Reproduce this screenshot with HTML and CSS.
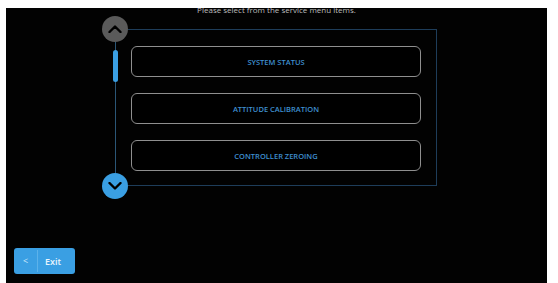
FILE: index.html
```html
<!DOCTYPE html>
<html lang="en">
<head>
    <meta charset="UTF-8">
    <meta name="viewport" content="width=device-width, initial-scale=1.0">
    <title>Service Menu</title>
    <link rel="stylesheet" href="styles.css">
</head>
<body>

<div class="screen">
    <div class="prompt">Please select from the service menu items.</div>

    <div class="frame">
        <button class="scroll scroll-up" aria-label="Scroll up">
            <svg width="14" height="8" viewBox="0 0 14 8"><path d="M1.5 7 L7 1.5 L12.5 7" fill="none" stroke="#000" stroke-width="2.4" stroke-linecap="round" stroke-linejoin="round"/></svg>
        </button>
        <div class="thumb"></div>

        <button class="item">SYSTEM STATUS</button>
        <button class="item">ATTITUDE CALIBRATION</button>
        <button class="item">CONTROLLER ZEROING</button>

        <button class="scroll scroll-down" aria-label="Scroll down">
            <svg width="14" height="8" viewBox="0 0 14 8"><path d="M1.5 1 L7 6.5 L12.5 1" fill="none" stroke="#000" stroke-width="2.4" stroke-linecap="round" stroke-linejoin="round"/></svg>
        </button>
    </div>

    <button class="btn-exit">
        <span class="exit-arrow">&lt;</span>
        <span class="exit-label">Exit</span>
    </button>
</div>

</body>
</html>
```

FILE: styles.css
```css
body {
    margin: 0;
    background: #fff;
    font-family: "Open Sans", "Liberation Sans", sans-serif;
}
.screen {
    width: 541px;
    height: 275px;
    margin: 8px 0 0 6px;
    background: #020202;
    overflow: hidden;
    display: flex;
    flex-direction: column;
}
.prompt {
    margin-top: -5px;
    height: 13px;
    line-height: 13px;
    font-size: 8px;
    color: #bdbdbd;
    text-align: center;
}
.frame {
    position: relative;
    width: 322px;
    height: 157px;
    margin: 13px 0 0 109px;
    border: 1px solid #1e3d5a;
    border-left: none;
    padding: 16px 15px 15px 16px;
    box-sizing: border-box;
    display: flex;
    flex-direction: column;
    gap: 16px;
}
.frame::before {
    content: "";
    position: absolute;
    left: 0;
    top: -1px;
    bottom: -1px;
    width: 1px;
    background: #2b5676;
}
.scroll {
    position: absolute;
    left: -13px;
    width: 26px;
    height: 26px;
    border: none;
    border-radius: 50%;
    padding: 0;
    display: flex;
    align-items: center;
    justify-content: center;
    z-index: 1;
}
.scroll-up {
    top: -14px;
    background: #5a5a5a;
}
.scroll-down {
    bottom: -14px;
    background: #3a9fe3;
}
.thumb {
    position: absolute;
    left: -2px;
    top: 20px;
    width: 5px;
    height: 32px;
    border-radius: 3px;
    background: #3a9fe3;
}
.item {
    height: 31px;
    width: 100%;
    flex: none;
    background: #000;
    border: 1.5px solid #8f8f8f;
    border-radius: 6px;
    color: #3f8fd0;
    font-family: "Open Sans", "Liberation Sans", sans-serif;
    font-size: 7.5px;
    font-weight: 600;
    cursor: pointer;
}
.btn-exit {
    margin: auto 0 9px 8px;
    width: 61px;
    height: 26px;
    border: none;
    border-radius: 3px;
    background: #3a9fe3;
    color: #eaf5fd;
    display: flex;
    align-items: center;
    padding: 0;
    font-family: "Open Sans", "Liberation Sans", sans-serif;
    cursor: pointer;
}
.exit-arrow {
    width: 23px;
    height: 22px;
    line-height: 22px;
    border-right: 1px solid #5cb2ea;
    color: #cfe8fa;
    font-size: 9px;
    text-align: center;
}
.exit-label {
    padding-left: 7px;
    font-size: 9px;
    font-weight: 600;
}
```
